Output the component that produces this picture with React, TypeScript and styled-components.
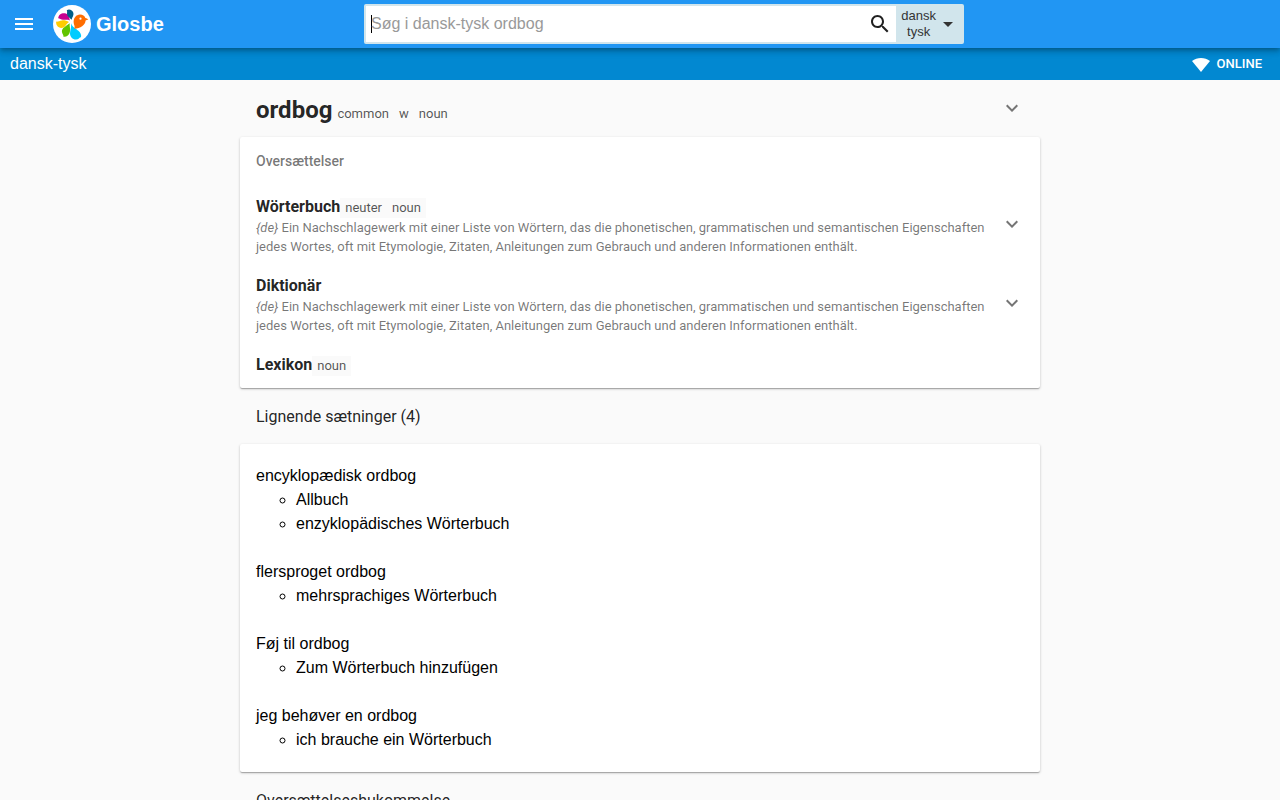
import React from "react";
import styled, { createGlobalStyle } from "styled-components";

const Global = createGlobalStyle`
  *, *::before, *::after { box-sizing: border-box; }
  body {
    margin: 0;
    background: #fafafa;
    color: rgba(0, 0, 0, 0.87);
    font-family: Roboto, "Liberation Sans", sans-serif;
    font-size: 16px;
    line-height: 24px;
  }
  button, input { font-family: inherit; }
`;

const TopBar = styled.header`
  position: relative;
  z-index: 1;
  display: grid;
  grid-template-columns: 48px 1fr minmax(0, 600px) 1fr;
  align-items: center;
  height: 48px;
  background: #2196f3;
  box-shadow: 0 2px 4px -1px rgba(0, 0, 0, 0.2), 0 4px 5px rgba(0, 0, 0, 0.14),
    0 1px 10px rgba(0, 0, 0, 0.12);
  font-family: "Liberation Sans", Arial, sans-serif;
`;

const MenuButton = styled.button`
  display: flex;
  padding: 12px;
  border: 0;
  background: none;
  color: #fff;
`;

const HomeLink = styled.a`
  display: flex;
  align-items: center;
  justify-self: start;
  gap: 5px;
  margin-left: 5px;
  color: #fff;
  font-size: 20px;
  font-weight: 700;
  text-decoration: none;
`;

const SearchBox = styled.form`
  display: flex;
  height: 40px;
  border: 2px solid #d1e5ec;
  border-radius: 2px;
  background: #fff;
`;

/* While the box is empty, a steady caret is shown at its start. */
const SearchInput = styled.input`
  flex: 1;
  min-width: 0;
  padding: 0 5px;
  border: 0;
  outline: 0;
  background: none;
  color: #000;
  font-size: 16px;
  &::placeholder {
    color: #999;
  }
  &:placeholder-shown {
    background: linear-gradient(#000, #000) 5px center / 1px 18px no-repeat;
    caret-color: transparent;
  }
`;

const SearchButton = styled.button`
  display: flex;
  align-items: center;
  padding: 0 4px;
  border: 0;
  background: none;
  color: #212121;
`;

const LanguageButton = styled.button`
  display: flex;
  align-items: center;
  padding: 0 2px 0 5px;
  border: 0;
  background: #d1e5ec;
  color: #333;
  font-size: 13px;
  line-height: 16px;
`;

const SubBar = styled.nav`
  display: flex;
  align-items: center;
  justify-content: space-between;
  height: 32px;
  padding: 0 18px 0 10px;
  background: #0288d1;
  color: #fff;
`;

const PairLink = styled.a`
  color: #fff;
  font-family: "Liberation Sans", Arial, sans-serif;
  text-decoration: none;
`;

const Status = styled.button`
  display: flex;
  align-items: center;
  gap: 7px;
  padding: 0 0 2px;
  border: 0;
  background: none;
  color: #fff;
  font-size: 13px;
  font-weight: 500;
`;

const Page = styled.main`
  max-width: 800px;
  margin: 0 auto;
`;

const WordHeader = styled.div`
  display: flex;
  align-items: center;
  justify-content: space-between;
  height: 57px;
  padding: 0 16px;
`;

const Headword = styled.h1`
  margin: 0;
  padding-top: 2px;
  font-size: 24px;
  line-height: 32px;
`;

const Tag = styled.span<{ $filled?: boolean }>`
  display: inline-block;
  padding: 0 5px;
  background: ${(p) => (p.$filled ? "#fafafa" : "transparent")};
  color: rgba(0, 0, 0, 0.68);
  font-size: 13px;
  font-weight: 400;
  line-height: 20px;
`;

const ExpandButton = styled.button`
  display: flex;
  flex: none;
  padding: 0 0 1px;
  border: 0;
  background: none;
  color: #757575;
`;

const Card = styled.section<{ $padded?: boolean }>`
  padding: ${(p) => (p.$padded ? "20px 16px" : "0 0 4px")};
  border-radius: 2px;
  background: #fff;
  box-shadow: 0 1px 3px rgba(0, 0, 0, 0.2), 0 1px 1px rgba(0, 0, 0, 0.14),
    0 2px 1px -1px rgba(0, 0, 0, 0.12);
`;

const CardTitle = styled.h2`
  margin: 0;
  padding: 0 16px;
  color: rgba(0, 0, 0, 0.54);
  font-size: 14px;
  font-weight: 500;
  line-height: 48px;
`;

const PlainList = styled.ul`
  margin: 0;
  padding: 0;
  list-style: none;
`;

const Translation = styled.li`
  display: flex;
  align-items: center;
  justify-content: space-between;
  padding: 8px 16px;
`;

const Term = styled.h3`
  margin: 0;
  padding-top: 3px;
  font-size: 16px;
  line-height: 22px;
`;

const Definition = styled.p`
  margin: 0;
  color: rgba(0, 0, 0, 0.54);
  font-size: 13px;
  line-height: 19px;
`;

const SectionTitle = styled.h2`
  margin: 0;
  padding: 2px 16px 0;
  font-size: 16px;
  font-weight: 400;
  line-height: 54px;
`;

const PhraseList = styled(PlainList)`
  display: grid;
  gap: 24px;
  color: #000;
  font-family: "Liberation Sans", Arial, sans-serif;
`;

const PhraseTranslations = styled.ul`
  margin: 0;
  padding-left: 40px;
  list-style: circle;
`;

const Logo = () => (
  <svg width="38" height="38" viewBox="0 0 38 38" aria-hidden="true">
    <circle cx="19" cy="19" r="19" fill="#fff" />
    <path d="M5.2 13.3C5.4 9.8 8.4 7.8 11.8 8.2C15 8.8 16.6 11.8 16.8 15.6C14.4 14.4 12.4 15 10 14.8C7.8 14.6 6.6 13.4 5.2 13.3Z" fill="#c6008f" />
    <path d="M13.8 5.2C16.2 3.8 19.6 5 20.4 8C21 10.6 19 12.4 18.6 14.8C17.4 13 15 12.4 14.2 10C13.6 8.2 14.6 6.8 13.8 5.2Z" fill="#005f86" />
    <path d="M3.2 16.6C5 17 6.4 15.6 9 15.4C11.8 15.2 13.8 15.8 16 17C13.6 18.4 13 20.8 11 22.2C8.6 23.6 5.6 23 4.2 20.8C3.2 19.4 3 18 3.2 16.6Z" fill="#fc0" />
    <path d="M16.7 18.3C16.3 21.4 17.6 23.6 16.9 27C16.2 30.2 13.4 32.2 10.4 31.7C11 30.4 9.1 29 8.9 26.8C8.7 22.8 13 21.4 16.7 18.3Z" fill="#62c400" />
    <path d="M18.2 18.2C19.2 22 22.6 23.2 25.4 25.8C27.6 27.8 28.6 30 28 32.2C26.6 31.8 26 34.4 23 34.6C19.6 34.7 17 32 17 28.6C17 25 18.5 22.8 18.2 18.2Z" fill="#0cf" />
    <path d="M20.7 18C20.2 13 23.2 9.5 27 9.5C29.8 9.5 31.6 11 32.4 13C33.4 13.3 34.4 13.7 35.4 14.4C34.2 14.6 33.2 15 32.6 15.6C32.2 20.4 27.6 23.4 21.2 23.8C22.4 21.6 20.9 20 20.7 18Z" fill="#ff6d00" />
    <circle cx="27.5" cy="13.7" r="1.1" fill="#fff" />
  </svg>
);

const Icon = ({ d, size = 24 }: { d: string; size?: number }) => (
  <svg width={size} height={size} viewBox="0 0 24 24" fill="currentColor" aria-hidden="true">
    <path d={d} />
  </svg>
);

const icons = {
  menu: "M3 18h18v-2H3v2zm0-5h18v-2H3v2zm0-7v2h18V6H3z",
  search:
    "M15.5 14h-.79l-.28-.27C15.41 12.59 16 11.11 16 9.5 16 5.91 13.09 3 9.5 3S3 5.91 3 9.5 5.91 16 9.5 16c1.61 0 3.09-.59 4.23-1.57l.27.28v.79l5 4.99L20.49 19l-4.99-5zm-6 0C7.01 14 5 11.99 5 9.5S7.01 5 9.5 5 14 7.01 14 9.5 11.99 14 9.5 14z",
  drop: "M7 10l5 5 5-5z",
  expand: "M16.59 8.59L12 13.17 7.41 8.59 6 10l6 6 6-6z",
};

const ExpandToggle = ({ label }: { label: string }) => (
  <ExpandButton type="button" aria-label={label}>
    <Icon d={icons.expand} />
  </ExpandButton>
);

const definition =
  "Ein Nachschlagewerk mit einer Liste von Wörtern, das die phonetischen, grammatischen und semantischen Eigenschaften jedes Wortes, oft mit Etymologie, Zitaten, Anleitungen zum Gebrauch und anderen Informationen enthält.";

const translations: { term: string; tags: string[]; text?: string }[] = [
  { term: "Wörterbuch", tags: ["neuter", "noun"], text: definition },
  { term: "Diktionär", tags: [], text: definition },
  { term: "Lexikon", tags: ["noun"] },
];

const phrases = [
  { phrase: "encyklopædisk ordbog", results: ["Allbuch", "enzyklopädisches Wörterbuch"] },
  { phrase: "flersproget ordbog", results: ["mehrsprachiges Wörterbuch"] },
  { phrase: "Føj til ordbog", results: ["Zum Wörterbuch hinzufügen"] },
  { phrase: "jeg behøver en ordbog", results: ["ich brauche ein Wörterbuch"] },
];

export default function App() {
  return (
    <>
      <Global />
      <TopBar>
        <MenuButton type="button" aria-label="Menu">
          <Icon d={icons.menu} />
        </MenuButton>
        <HomeLink href="#">
          <Logo />
          Glosbe
        </HomeLink>
        <SearchBox role="search" onSubmit={(e) => e.preventDefault()}>
          <SearchInput
            type="text"
            aria-label="Søg i dansk-tysk ordbog"
            placeholder="Søg i dansk-tysk ordbog"
            autoFocus
          />
          <SearchButton type="submit" aria-label="Søg">
            <Icon d={icons.search} />
          </SearchButton>
          <LanguageButton type="button">
            <span>
              dansk
              <br />
              tysk
            </span>
            <Icon d={icons.drop} />
          </LanguageButton>
        </SearchBox>
      </TopBar>
      <SubBar>
        <PairLink href="#">dansk-tysk</PairLink>
        <Status type="button">
          <svg width="18" height="18" viewBox="0 -4 18 18" fill="currentColor" aria-hidden="true">
            <path d="M0 3C5 -1 13 -1 18 3L9 14Z" />
          </svg>
          ONLINE
        </Status>
      </SubBar>
      <Page>
        <WordHeader>
          <Headword>
            ordbog
            <Tag>common</Tag>
            <Tag>w</Tag>
            <Tag>noun</Tag>
          </Headword>
          <ExpandToggle label="ordbog" />
        </WordHeader>
        <Card>
          <CardTitle>Oversættelser</CardTitle>
          <PlainList>
            {translations.map(({ term, tags, text }) => (
              <Translation key={term}>
                <div>
                  <Term>
                    {term}
                    {tags.map((tag) => (
                      <Tag key={tag} $filled>
                        {tag}
                      </Tag>
                    ))}
                  </Term>
                  {text && (
                    <Definition>
                      <em>{"{de}"}</em> {text}
                    </Definition>
                  )}
                </div>
                {text && <ExpandToggle label={term} />}
              </Translation>
            ))}
          </PlainList>
        </Card>
        <SectionTitle>Lignende sætninger (4)</SectionTitle>
        <Card $padded>
          <PhraseList>
            {phrases.map(({ phrase, results }) => (
              <li key={phrase}>
                {phrase}
                <PhraseTranslations>
                  {results.map((result) => (
                    <li key={result}>{result}</li>
                  ))}
                </PhraseTranslations>
              </li>
            ))}
          </PhraseList>
        </Card>
        <SectionTitle>Oversættelseshukommelse</SectionTitle>
      </Page>
    </>
  );
}
